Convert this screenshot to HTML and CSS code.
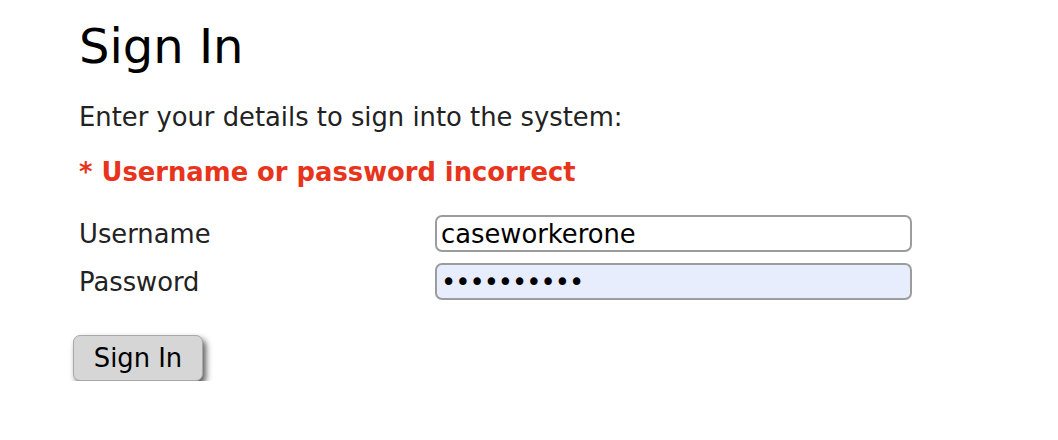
FILE: index.html
```html
<!DOCTYPE html>
<html lang="en">

<head>
    <meta charset="UTF-8">
    <meta name="viewport" content="width=device-width, initial-scale=1.0">
    <title>Sign In</title>
    <link rel="stylesheet" href="styles.css">
</head>

<body>
    <div class="page">
        <h1>Sign In</h1>

        <p class="intro">Enter your details to sign into the system:</p>

        <p class="error">* Username or password incorrect</p>

        <form class="login-form" onsubmit="return false;">
            <div class="fields">
                <label for="username">Username</label>
                <input type="text" id="username" name="username" value="caseworkerone">
                <label for="password">Password</label>
                <input type="password" id="password" name="password" class="filled" value="password12">
            </div>
            <button type="submit" class="submit-btn">Sign In</button>
        </form>
    </div>
</body>

</html>
```

FILE: styles.css
```css
body {
    font-family: "DejaVu Sans", Verdana, sans-serif;
    margin: 0;
    background-color: #fff;
    color: #222;
}

.page {
    padding: 18px 0 0 79px;
}

h1 {
    font-size: 48px;
    font-weight: normal;
    color: #000;
    margin: 0 0 28px 0;
    line-height: 56px;
}

.intro {
    font-size: 25.8px;
    margin: 0 0 25px 0;
    line-height: 30px;
}

.error {
    font-size: 25.8px;
    font-weight: bold;
    color: #e8341c;
    margin: 0 0 28px 0;
    line-height: 30px;
}

.fields {
    display: grid;
    grid-template-columns: 356px 477px;
    row-gap: 11px;
    align-items: center;
}

.fields label {
    font-size: 25.8px;
}

.fields input {
    font-family: "DejaVu Sans", Verdana, sans-serif;
    font-size: 25.8px;
    height: 37px;
    box-sizing: border-box;
    border: 2px solid #9c9c9c;
    border-radius: 7px;
    padding: 0 4px;
    color: #000;
    background-color: #fff;
    outline: none;
}

.fields input.filled {
    background-color: #e7edfd;
    letter-spacing: -1px;
}

.submit-btn {
    font-family: "DejaVu Sans", Verdana, sans-serif;
    font-size: 25.8px;
    color: #000;
    margin: 35px 0 0 -6px;
    width: 130px;
    height: 46px;
    background-color: #d6d6d6;
    border: 1px solid #a8a8a8;
    border-radius: 7px;
    box-shadow: 3px 4px 6px rgba(0, 0, 0, 0.65);
    cursor: pointer;
}
```
